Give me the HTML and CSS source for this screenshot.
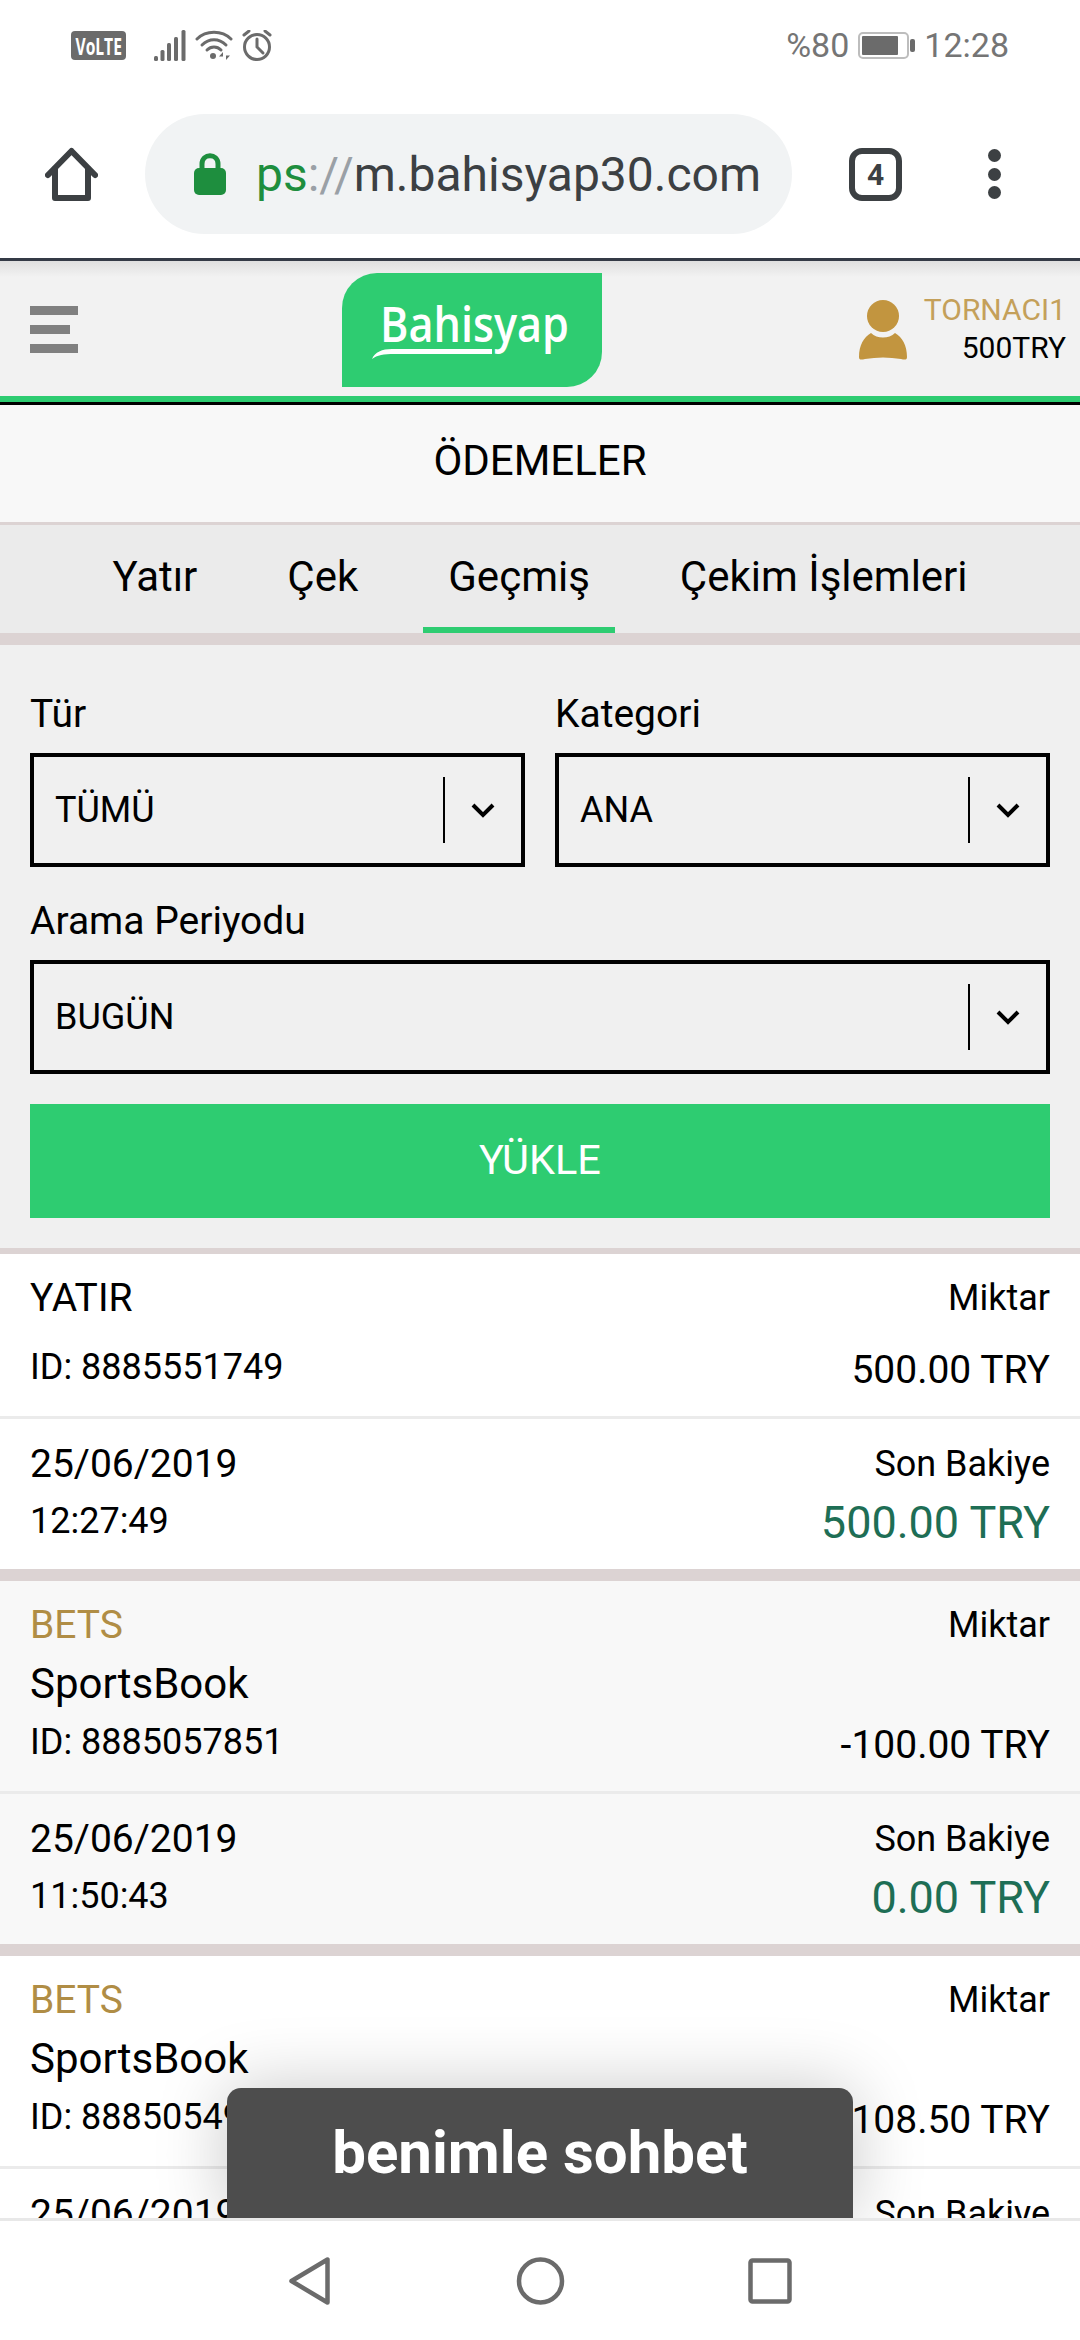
FILE: index.html

```html
<!DOCTYPE html>
<html lang="tr">
<head>
  <meta charset="UTF-8">
  <title>Bahisyap - Ödemeler</title>
  <link rel="stylesheet" href="styles.css">
</head>
<body>

  <div class="status">
    <div class="volte"><span>VoLTE</span></div>
    <svg class="ic-signal" width="33" height="31" viewBox="0 0 33 31" fill="#6b6b6b">
      <rect x="1" y="26" width="4" height="5" rx="1.5"/>
      <rect x="7.5" y="20" width="4" height="11" rx="1.5"/>
      <rect x="14" y="13" width="4" height="18" rx="1.5"/>
      <rect x="21" y="7" width="4" height="24" rx="1.5"/>
      <rect x="28.5" y="0" width="4" height="31" rx="1.5"/>
    </svg>
    <svg class="ic-wifi" width="38" height="30" viewBox="0 0 38 30" fill="none" stroke="#6b6b6b" stroke-width="3" stroke-linecap="round">
      <path d="M2 9C11 0 27 0 36 9"/>
      <path d="M7 15C14 8 24 8 31 15"/>
      <path d="M12 20C16 16 22 16 26 20"/>
      <circle cx="18" cy="26" r="3" fill="#6b6b6b" stroke="none"/>
      <path d="M28 22l-4 4.500h4zM31 30l4-4.500h-4z" fill="#6b6b6b" stroke="none"/>
    </svg>
    <svg class="ic-alarm" width="30" height="31" viewBox="0 0 30 31" fill="none" stroke="#6b6b6b" stroke-width="3" stroke-linecap="round">
      <circle cx="15" cy="17" r="12.500"/>
      <path d="M15 9v8l6 6"/>
      <path d="M2 5l5-4M28 5l-5-4"/>
    </svg>
    <div class="status-right">
      <span>%80</span>
      <svg class="ic-battery" width="57" height="27" viewBox="0 0 57 27">
        <rect x="1" y="1" width="49" height="25" rx="4" fill="#fff" stroke="#bdbdbd" stroke-width="2"/>
        <rect x="4" y="4" width="36" height="19" rx="1" fill="#6b6b6b"/>
        <rect x="52" y="7" width="5" height="13" rx="2" fill="#6b6b6b"/>
      </svg>
      <span>12:28</span>
    </div>
  </div>

  <div class="toolbar">
    <svg class="ic-home" width="53" height="54" viewBox="0 0 53 54" fill="none" stroke="#3c4043" stroke-width="6" stroke-linecap="round" stroke-linejoin="round">
      <path d="M3 28L26.500 4L50 28"/>
      <path d="M10 22V51H43V22"/>
    </svg>
    <div class="url-pill">
      <svg class="ic-lock" width="32" height="42" viewBox="0 0 32 42">
        <path d="M8 17V11C8 0 24 0 24 11V17" fill="none" stroke="#1e8e3e" stroke-width="5"/>
        <rect y="15" width="32" height="27" rx="5" fill="#1e8e3e"/>
      </svg>
      <span class="url"><span class="url-green">ps</span><span class="url-gray">://</span>m.bahisyap30.com</span>
    </div>
    <div class="tab-count">4</div>
    <div class="menu-dots"><i></i><i></i><i></i></div>
  </div>

  <div class="site-header">
    <div class="burger"><i></i><i class="short"></i><i></i></div>
    <svg class="logo" width="260" height="114" viewBox="0 0 260 114">
      <path d="M35 0H260V79A35 35 0 0 1 225 114H0V35A35 35 0 0 1 35 0Z" fill="#2ecc71"/>
      <text x="38" y="69" font-size="48" textLength="189" lengthAdjust="spacingAndGlyphs" class="logo-text">Bahisyap</text>
      <path d="M30 86C33 79 40 76 50 76H150V81H52C42 81 35 82 30 86Z" fill="#fff"/>
    </svg>
    <div class="user">
      <svg width="48" height="60" viewBox="0 0 48 60" fill="#c2953f">
        <circle cx="24" cy="16" r="16"/>
        <path d="M12 33C18 39 30 39 36 33C43 37 48 45 48 57C48 60 46 60 42 59C30 57 18 57 6 59C2 60 0 60 0 57C0 45 5 37 12 33Z"/>
      </svg>
      <div class="user-info">
        <div class="user-name">TORNACI1</div>
        <div class="user-balance">500TRY</div>
      </div>
    </div>
  </div>
  <i class="tick"></i>

  <main class="content">
    <div class="page-title">ÖDEMELER</div>

    <div class="tabs">
      <a class="tab">Yatır</a>
      <a class="tab">Çek</a>
      <a class="tab active">Geçmiş</a>
      <a class="tab">Çekim İşlemleri</a>
    </div>

    <div class="filters">
      <div class="filter-row">
        <div class="filter">
          <label>Tür</label>
          <div class="select">
            <span class="select-value">TÜMÜ</span>
            <span class="select-arrow"><svg width="26" height="16" viewBox="0 0 26 16"><path d="M3 3l10 10L23 3" fill="none" stroke="#000" stroke-width="4"/></svg></span>
          </div>
        </div>
        <div class="filter">
          <label>Kategori</label>
          <div class="select">
            <span class="select-value">ANA</span>
            <span class="select-arrow"><svg width="26" height="16" viewBox="0 0 26 16"><path d="M3 3l10 10L23 3" fill="none" stroke="#000" stroke-width="4"/></svg></span>
          </div>
        </div>
      </div>
      <div class="filter">
        <label>Arama Periyodu</label>
        <div class="select">
          <span class="select-value">BUGÜN</span>
          <span class="select-arrow"><svg width="26" height="16" viewBox="0 0 26 16"><path d="M3 3l10 10L23 3" fill="none" stroke="#000" stroke-width="4"/></svg></span>
        </div>
      </div>
      <button class="load-btn">YÜKLE</button>
    </div>

    <div class="item">
      <div class="item-top">
        <div class="col">
          <div class="type">YATIR</div>
          <div class="id">ID: 8885551749</div>
        </div>
        <div class="col right">
          <div class="caption">Miktar</div>
          <div class="amount">500.00 TRY</div>
        </div>
      </div>
      <div class="item-bottom">
        <div class="col">
          <div class="date">25/06/2019</div>
          <div class="time">12:27:49</div>
        </div>
        <div class="col right">
          <div class="caption">Son Bakiye</div>
          <div class="balance">500.00 TRY</div>
        </div>
      </div>
    </div>

    <div class="item alt">
      <div class="item-top">
        <div class="col">
          <div class="type bets">BETS</div>
          <div class="game">SportsBook</div>
          <div class="id">ID: 8885057851</div>
        </div>
        <div class="col right">
          <div class="caption">Miktar</div>
          <div class="amount">-100.00 TRY</div>
        </div>
      </div>
      <div class="item-bottom">
        <div class="col">
          <div class="date">25/06/2019</div>
          <div class="time">11:50:43</div>
        </div>
        <div class="col right">
          <div class="caption">Son Bakiye</div>
          <div class="balance">0.00 TRY</div>
        </div>
      </div>
    </div>

    <div class="item">
      <div class="item-top">
        <div class="col">
          <div class="type bets">BETS</div>
          <div class="game">SportsBook</div>
          <div class="id">ID: 8885054912</div>
        </div>
        <div class="col right">
          <div class="caption">Miktar</div>
          <div class="amount">-108.50 TRY</div>
        </div>
      </div>
      <div class="item-bottom">
        <div class="col">
          <div class="date">25/06/2019</div>
        </div>
        <div class="col right">
          <div class="caption">Son Bakiye</div>
        </div>
      </div>
    </div>

    <div class="chat">benimle sohbet</div>
  </main>

  <div class="nav-bar">
    <svg width="41" height="48" viewBox="0 0 41 48" fill="none" stroke="#6b6b6b" stroke-width="4.500" stroke-linejoin="round">
      <path d="M38.500 2.500V45.500L2.500 24Z"/>
    </svg>
    <svg class="nav-home" width="49" height="48" viewBox="0 0 49 48" fill="none" stroke="#6b6b6b" stroke-width="4.500">
      <circle cx="24.500" cy="24" r="21.500"/>
    </svg>
    <svg class="nav-recent" width="44" height="46" viewBox="0 0 44 46" fill="none" stroke="#6b6b6b" stroke-width="4.500" stroke-linejoin="round">
      <rect x="2.500" y="2.500" width="39" height="41" rx="2"/>
    </svg>
  </div>

</body>
</html>
```

FILE: styles.css

```css
* {
  box-sizing: border-box;
}
html, body {
  margin: 0;
  padding: 0;
}
body {
  width: 1080px;
  height: 2340px;
  display: flex;
  flex-direction: column;
  overflow: hidden;
  position: relative;
  background: #fff;
  font-family: Roboto, "Noto Sans", sans-serif;
  color: #000;
}

/* android status bar */
.status {
  height: 90px;
  flex: none;
  display: flex;
  align-items: center;
  padding: 0 71px 0 71px;
  color: #757575;
  font-size: 34px;
}
.volte {
  width: 55px;
  height: 29px;
  display: flex;
  justify-content: center;
  border-radius: 4px;
  background: #6b6b6b;
  color: #fff;
  font-family: "Open Sans", sans-serif;
  font-size: 24px;
  font-weight: 700;
  line-height: 29px;
}
.volte span {
  display: block;
  transform: scaleX(.65);
}
.ic-signal {
  margin-left: 27px;
}
.ic-wifi {
  margin-left: 9px;
}
.ic-alarm {
  margin-left: 9px;
}
.status-right {
  margin-left: auto;
  display: flex;
  align-items: center;
  gap: 9px;
}

/* browser toolbar */
.toolbar {
  height: 168px;
  flex: none;
  display: flex;
  align-items: center;
  padding-left: 45px;
}
.url-pill {
  width: 647px;
  height: 120px;
  margin-left: 47px;
  padding-left: 49px;
  display: flex;
  align-items: center;
  gap: 30px;
  border-radius: 60px;
  background: #f1f3f4;
  overflow: hidden;
}
.url {
  font-size: 48px;
  color: #3c4043;
  white-space: nowrap;
}
.url-green {
  color: #1e8e3e;
}
.url-gray {
  color: #9aa0a6;
}
.tab-count {
  width: 53px;
  height: 53px;
  margin-left: 57px;
  border: 6px solid #3c4043;
  border-radius: 13px;
  color: #3c4043;
  font-size: 30px;
  font-weight: 700;
  line-height: 41px;
  text-align: center;
}
.menu-dots {
  margin-left: 86px;
  display: flex;
  flex-direction: column;
  gap: 5.500px;
}
.menu-dots i {
  display: block;
  width: 13px;
  height: 13px;
  border-radius: 50%;
  background: #3c4043;
}

/* site header */
.site-header {
  height: 147px;
  flex: none;
  display: flex;
  align-items: flex-start;
  padding: 12px 14px 0 30px;
  border-top: 3px solid #343a46;
  border-bottom: 3px solid #000;
  box-shadow: inset 0 -6px 0 0 #2ecc71;
  background: linear-gradient(#dfdfdf, #f2f2f2 16px);
}
.burger {
  width: 48px;
  margin-top: 33px;
  display: flex;
  flex-direction: column;
  gap: 10px;
}
.burger i {
  display: block;
  height: 9px;
  background: #808080;
}
.burger .short {
  width: 40px;
}
.logo {
  margin-left: 264px;
}
.logo-text {
  font-family: "Open Sans", sans-serif;
  font-weight: 600;
  fill: #fff;
}
.user {
  margin-left: auto;
  display: flex;
  align-items: flex-start;
}
.user svg {
  margin-top: 27px;
}
.user-info {
  margin-left: 16px;
  width: 143px;
  text-align: right;
  font-size: 30px;
  line-height: 36px;
}
.user-name {
  color: #c4a05a;
  margin-top: 19px;
  white-space: nowrap;
}
.user-balance {
  margin-top: 2px;
}
.tick {
  position: absolute;
  left: 933px;
  top: 405px;
  width: 3px;
  height: 4px;
  background: #222;
}

/* page */
.content {
  flex: 1;
  position: relative;
  overflow: hidden;
}
.page-title {
  height: 120px;
  line-height: 111px;
  text-align: center;
  font-size: 42px;
  background: #f8f8f8;
  border-bottom: 3px solid #dcd3d3;
}
.tabs {
  display: flex;
  justify-content: center;
  background: #ebebeb;
  border-bottom: 12px solid #dcd3d3;
}
.tab {
  margin: 0 20px;
  padding: 2px 25px 0;
  font-size: 42px;
  line-height: 100px;
  border-bottom: 6px solid transparent;
}
.tab.active {
  border-bottom-color: #2ecc71;
}

/* filter form */
.filters {
  padding: 46px 30px 30px;
  background: #f0f0f0;
  border-bottom: 6px solid #dcd3d3;
}
.filter-row {
  display: flex;
  gap: 30px;
  margin-bottom: 31px;
}
.filter {
  flex: 1;
}
.filter label {
  display: block;
  font-size: 39px;
  line-height: 46px;
  margin-bottom: 16px;
}
.select {
  height: 114px;
  display: flex;
  align-items: center;
  justify-content: space-between;
  padding-left: 21px;
  border: 4px solid #000;
  font-size: 36px;
}
.select-value {
  margin-bottom: 1px;
}
.select-arrow {
  width: 78px;
  height: 66px;
  display: flex;
  align-items: center;
  justify-content: center;
  border-left: 2px solid #000;
}
.load-btn {
  display: block;
  width: 100%;
  height: 114px;
  margin-top: 30px;
  padding: 0 0 3px;
  border: none;
  background: #2ecc71;
  color: #fff;
  font-family: inherit;
  font-size: 41.500px;
}

/* history items */
.item {
  background: #fff;
  border-bottom: 12px solid #dcd3d3;
}
.item.alt {
  background: #f8f8f8;
}
.item-top,
.item-bottom {
  display: flex;
  justify-content: space-between;
  padding: 0 30px;
}
.item-top {
  min-height: 165px;
  padding-top: 21px;
  padding-bottom: 23px;
  border-bottom: 3px solid #ebebeb;
}
.item-bottom {
  min-height: 150px;
  padding-top: 22px;
  padding-bottom: 20px;
}
.col {
  display: flex;
  flex-direction: column;
  justify-content: space-between;
}
.item-bottom .col {
  justify-content: flex-start;
}
.right {
  align-items: flex-end;
}
.type {
  font-size: 39px;
  line-height: 46px;
}
.bets {
  color: #b08d45;
}
.game {
  margin: 12px 0 12px;
  font-size: 42px;
  line-height: 48px;
}
.id {
  padding-bottom: 4px;
  font-size: 36px;
  line-height: 44px;
}
.caption {
  font-size: 36px;
  line-height: 46px;
}
.amount {
  font-size: 39px;
  line-height: 46px;
}
.date {
  font-size: 39px;
  line-height: 46px;
}
.time {
  margin-top: 12px;
  font-size: 36px;
  line-height: 44px;
}
.balance {
  margin-top: 10px;
  color: #1e6e55;
  font-size: 45px;
  line-height: 52px;
}

/* chat popup */
.chat {
  position: absolute;
  left: 227px;
  bottom: 0;
  width: 626px;
  height: 130px;
  border-radius: 14px 14px 0 0;
  background: #4d4d4d;
  box-shadow: 0 0 70px rgba(0, 0, 0, .22);
  color: #fff;
  font-size: 60px;
  font-weight: 700;
  line-height: 130px;
  text-align: center;
}

/* android nav bar */
.nav-bar {
  height: 122px;
  flex: none;
  position: relative;
  display: flex;
  align-items: center;
  justify-content: center;
  background: #fff;
  border-top: 3px solid #e8e8e8;
}
.nav-home {
  margin-left: 186px;
}
.nav-recent {
  margin-left: 183px;
}
```
